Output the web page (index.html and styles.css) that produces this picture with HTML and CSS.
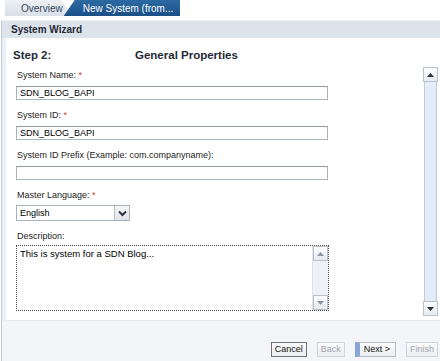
FILE: index.html
```html
<!DOCTYPE html>
<html lang="en">
<head>
  <meta charset="UTF-8">
  <title>System Wizard</title>
  <link rel="stylesheet" href="styles.css">
</head>
<body>
  <div class="tabs">
    <div class="tab">Overview</div>
    <div class="tab active">New System (from...</div>
  </div>

  <div class="panel">
    <div class="panel-head">System Wizard</div>

    <div class="panel-body">
      <div class="form">
        <div class="step">
          <span class="step-no">Step 2:</span>
          <span class="step-title">General Properties</span>
        </div>

        <div class="field">
          <div class="label">System Name: <span class="req">*</span></div>
          <div class="input">SDN_BLOG_BAPI</div>
        </div>

        <div class="field">
          <div class="label">System ID: <span class="req">*</span></div>
          <div class="input">SDN_BLOG_BAPI</div>
        </div>

        <div class="field">
          <div class="label">System ID Prefix (Example: com.companyname):</div>
          <div class="input"></div>
        </div>

        <div class="field">
          <div class="label">Master Language: <span class="req">*</span></div>
          <div class="select">
            <span class="select-value">English</span>
            <span class="select-btn">
              <svg width="9" height="7" viewBox="0 0 9 7"><path d="M1 1.5 L4.5 5 L8 1.5" fill="none" stroke="#2b3440" stroke-width="2"/></svg>
            </span>
          </div>
        </div>

        <div class="field last">
          <div class="label">Description:</div>
          <div class="textarea">
            <div class="textarea-text">This is system for a SDN Blog...</div>
            <div class="mini-scroll">
              <span class="sbtn"><svg width="7" height="4" viewBox="0 0 7 4"><path d="M0 4 L3.5 0 L7 4 Z" fill="#8a96a3"/></svg></span>
              <span class="strack"></span>
              <span class="sbtn"><svg width="7" height="4" viewBox="0 0 7 4"><path d="M0 0 L3.5 4 L7 0 Z" fill="#8a96a3"/></svg></span>
            </div>
          </div>
        </div>
      </div>

      <div class="vscroll">
        <span class="sbtn"><svg width="7" height="4" viewBox="0 0 7 4"><path d="M0 4 L3.5 0 L7 4 Z" fill="#2b3440"/></svg></span>
        <span class="strack"></span>
        <span class="sbtn"><svg width="7" height="4" viewBox="0 0 7 4"><path d="M0 0 L3.5 4 L7 0 Z" fill="#2b3440"/></svg></span>
      </div>
    </div>

    <div class="panel-foot">
      <span class="btn focus">Cancel</span>
      <span class="btn disabled">Back</span>
      <span class="btn primary">Next &gt;</span>
      <span class="btn disabled">Finish</span>
    </div>
  </div>
</body>
</html>
```

FILE: styles.css
```css
body {
  margin: 0;
  font-family: "Liberation Sans", Arial, sans-serif;
  font-size: 9px;
  color: #000;
  background: #fff;
  width: 440px;
  height: 361px;
  overflow: hidden;
}

.tabs {
  display: flex;
  height: 16px;
  padding-left: 5px;
  margin-bottom: 4px;
}

.tab {
  display: flex;
  align-items: center;
  padding: 0 9px 0 16px;
  color: #34495f;
  font-size: 10px;
  background: linear-gradient(#eef1f5, #d8dfe7);
  clip-path: polygon(0 0, calc(100% - 10px) 0, 100% 100%, 0 100%);
}

.tab.active {
  margin-left: -8px;
  padding: 0 7px 0 19px;
  color: #fff;
  background: linear-gradient(#2d6aa3, #1b4f85);
  clip-path: polygon(11px 0, 100% 0, 100% 100%, 0 100%);
}

.panel {
  margin-left: 1px;
  border-left: 1px solid #c5ced8;
  display: flex;
  flex-direction: column;
  height: 341px;
}

.panel-head {
  height: 17px;
  line-height: 17px;
  padding-left: 9px;
  font-weight: bold;
  font-size: 10px;
  color: #1f2a36;
  background: #dde3eb;
  border-top: 1px solid #eef1f5;
}

.panel-body {
  flex: 1;
  display: flex;
  border-left: 4px solid #e8eef5;
}

.form {
  flex: 1;
  padding: 9px 0 0 10px;
}

.step {
  display: flex;
  height: 16px;
  line-height: 16px;
  margin: 0 0 6px -3px;
  font-weight: bold;
  font-size: 11.5px;
  color: #1f2a36;
}

.step-no {
  width: 122px;
}

.field {
  margin-bottom: 9px;
}

.label {
  height: 12px;
  line-height: 12px;
  margin-bottom: 5px;
  padding-left: 1px;
  color: #222;
}

.req {
  color: #d2352e;
}

.input {
  box-sizing: border-box;
  width: 312px;
  height: 14px;
  line-height: 12px;
  padding-left: 3px;
  border: 1px solid #a9b1ba;
  border-top-color: #8f98a3;
  background: #fff;
}

.select {
  box-sizing: border-box;
  display: flex;
  width: 114px;
  height: 16px;
  margin-top: -1px;
  border: 1px solid #a9b1ba;
}

.select-value {
  flex: 1;
  line-height: 14px;
  padding-left: 3px;
}

.select-btn {
  width: 14px;
  display: flex;
  align-items: center;
  justify-content: center;
  border-left: 1px solid #b6bec7;
  background: linear-gradient(#f4f6f8, #dfe4ea);
}

.field.last .label {
  margin-bottom: 3px;
}

.textarea {
  box-sizing: border-box;
  display: flex;
  width: 313px;
  height: 66px;
  border: 1px dotted #4a4a4a;
  background: #fff;
}

.textarea-text {
  flex: 1;
  padding: 2px 3px;
  line-height: 12px;
  font-size: 9.5px;
}

.mini-scroll {
  width: 15px;
  display: flex;
  flex-direction: column;
  border-left: 1px solid #dde3ea;
  background: #eef2f6;
}

.sbtn {
  box-sizing: border-box;
  height: 15px;
  display: flex;
  align-items: center;
  justify-content: center;
  border: 1px solid #b9c2cc;
  background: linear-gradient(#fbfcfd, #e6ebf0);
}

.strack {
  flex: 1;
}

.vscroll {
  width: 15px;
  margin: 29px 2px 4px 0;
  display: flex;
  flex-direction: column;
}

.vscroll .strack {
  margin: 0 1px;
  background: #e3edf9;
  border: 1px solid #c3ccd6;
  border-top: 0;
  border-bottom: 0;
}

.panel-foot {
  height: 42px;
  box-sizing: border-box;
  display: flex;
  justify-content: flex-end;
  align-items: flex-end;
  gap: 10px;
  padding: 0 2px 4px 0;
  background: #f4f5f8;
  border-top: 1px solid #e4e7eb;
}

.btn {
  box-sizing: border-box;
  height: 15px;
  line-height: 13px;
  padding: 0 3px;
  border: 1px solid #b4bac2;
  background: linear-gradient(#fbfbfc, #eceef1);
  color: #111;
}

.btn.focus {
  border-color: #6d747c;
}

.btn.disabled {
  color: #a0a6ad;
  border-color: #d0d5db;
}

.btn.primary {
  border-left: 5px solid #86a6d3;
  padding: 0 5px 0 4px;
}
```
